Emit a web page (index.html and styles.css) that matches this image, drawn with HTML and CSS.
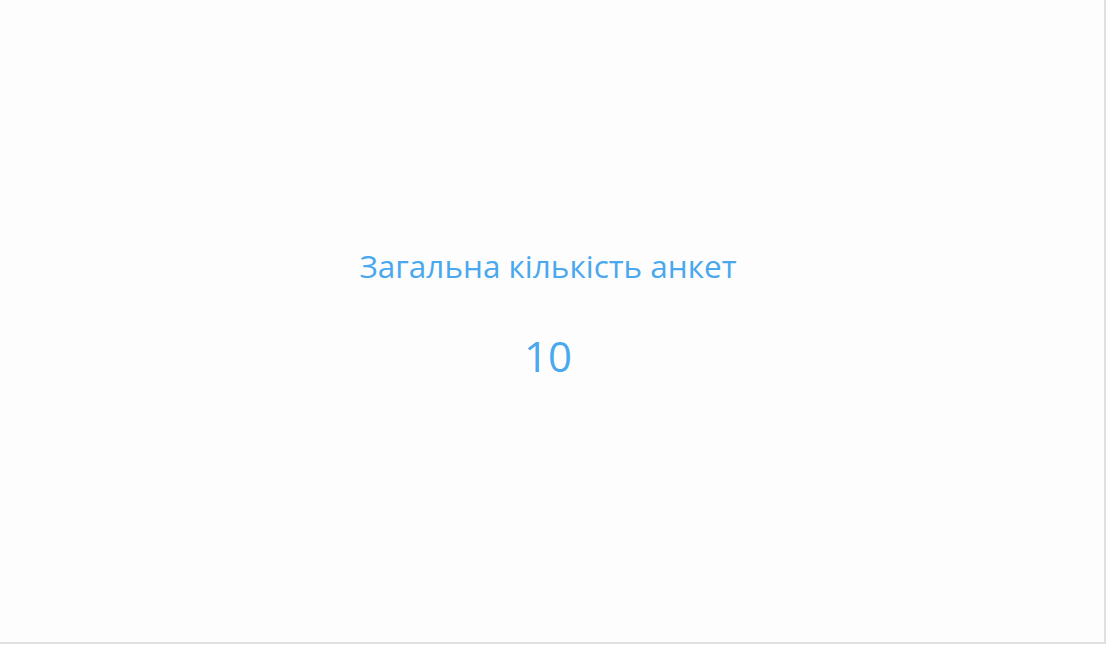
FILE: index.html
```html
<!DOCTYPE html>
<html lang="uk">
<head>
<meta charset="utf-8">
<link rel="stylesheet" href="styles.css">
</head>
<body>
<div class="card">
  <div class="stat">
    <div class="stat-title">Загальна кількість анкет</div>
    <div class="stat-value">10</div>
  </div>
</div>
</body>
</html>
```
FILE: styles.css
```css
html, body {
  margin: 0;
  padding: 0;
  background: #ffffff;
}
body {
  font-family: "Open Sans", "Noto Sans", sans-serif;
}
.card {
  box-sizing: border-box;
  width: 1106px;
  height: 644px;
  background: #fdfdfd;
  border-right: 2px solid #e0e0e0;
  border-bottom: 2px solid #e0e0e0;
  display: flex;
  align-items: center;
  justify-content: center;
}
.stat {
  display: flex;
  flex-direction: column;
  align-items: center;
  color: #4aa8ee;
  margin-right: 8px;
  margin-top: -12px;
}
.stat-title {
  font-size: 31.5px;
  line-height: 40px;
}
.stat-value {
  font-size: 42px;
  line-height: 56px;
  margin-top: 42px;
}
```
